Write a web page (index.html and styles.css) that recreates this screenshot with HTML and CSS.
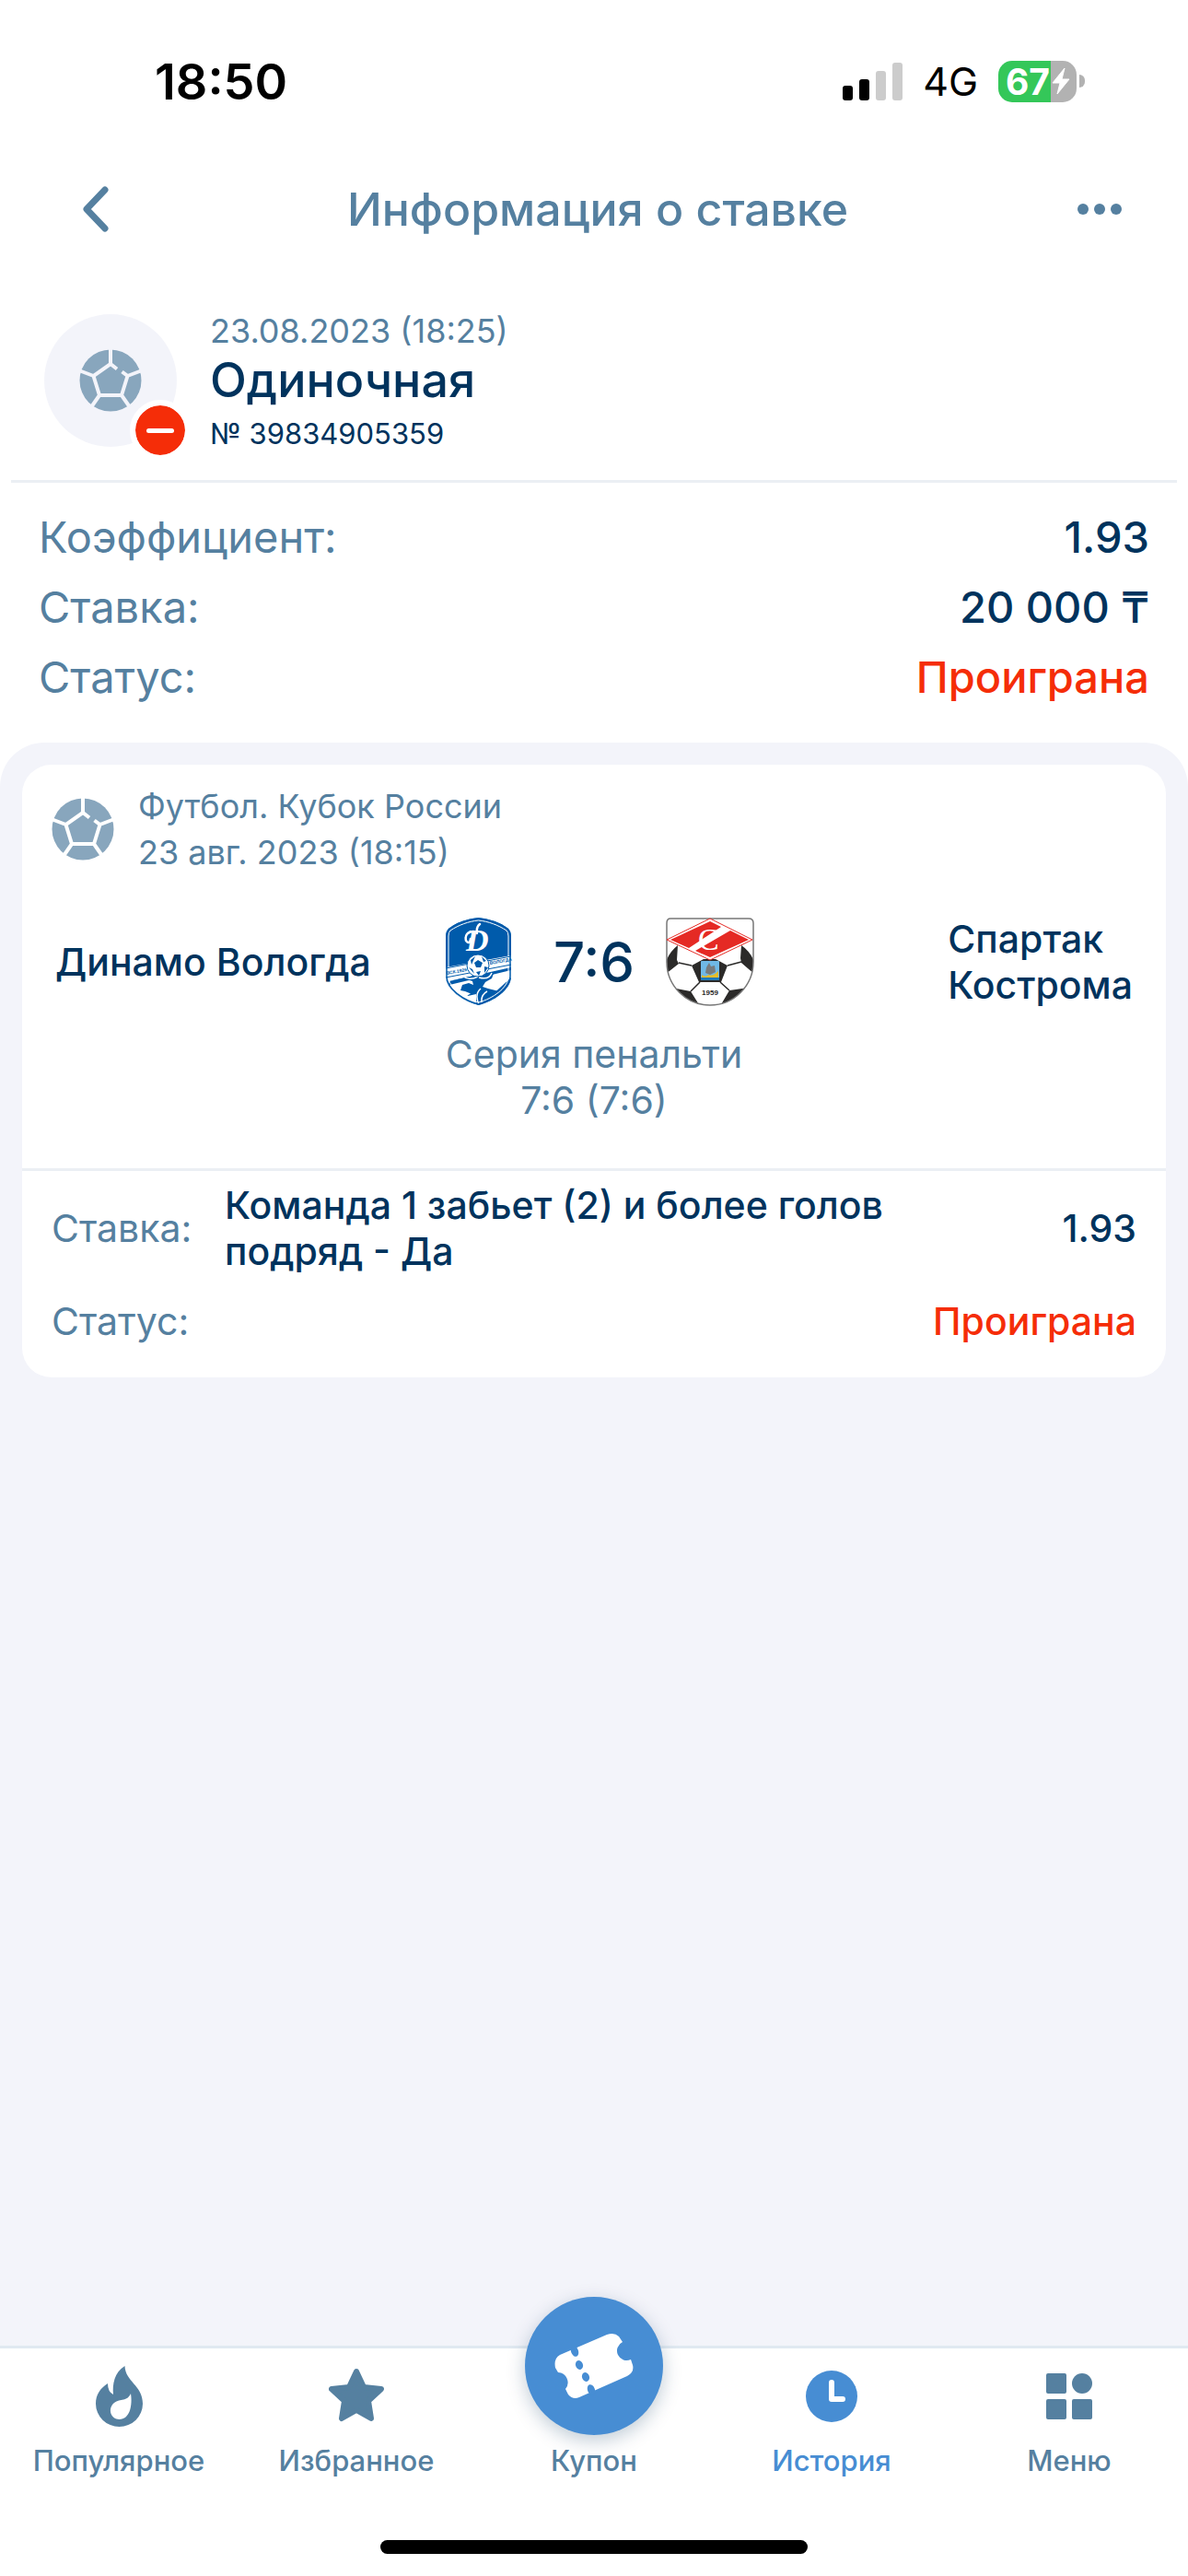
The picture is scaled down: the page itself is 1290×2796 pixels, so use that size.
FILE: index.html
```html
<!DOCTYPE html>
<html lang="ru">

<head>
    <meta charset="UTF-8" />
    <meta name="viewport" content="width=device-width, initial-scale=1.0" />
    <title>Информация о ставке</title>
    <link rel="stylesheet" href="styles.css">
</head>

<body>
    <!-- Shared icons -->
    <svg class="sprite" aria-hidden="true">
        <symbol id="ball" viewBox="-34 -34 68 68">
            <circle class="ball-fill" r="33.5" />
            <path class="ball-lines" d="M0-34V-18M7-12.5 0-18-18.5-5-12 16H12L18.5-5 12.500-9.500M18.500-5 33-10.500M-18.500-5-33-10.500M12 16 21 29M-12 16-21 29" />
        </symbol>
    </svg>

    <!-- Status bar -->
    <div class="status-bar">
        <span class="time">18:50</span>
        <div class="status-icons">
            <svg class="signal" width="65" height="42" viewBox="0 0 65 42">
                <rect x="0" y="26" width="11" height="16" rx="3" />
                <rect x="18" y="19" width="11" height="23" rx="3" />
                <rect x="36" y="10" width="11" height="32" rx="3" fill="#ccc" />
                <rect x="54" y="1" width="11" height="41" rx="3" fill="#ccc" />
            </svg>
            <span class="network">4G</span>
            <div class="battery">
                <span class="battery-body">
                    <span class="battery-level">67</span>
                    <svg width="20" height="30" viewBox="0 0 20 30">
                        <path d="M14 1 1 17H9L6 29 19 13H11Z" fill="#fff" stroke="#fff" stroke-width="1" stroke-linejoin="round" />
                    </svg>
                </span>
                <span class="battery-cap"></span>
            </div>
        </div>
    </div>

    <!-- Header -->
    <header class="header">
        <button class="icon-btn" aria-label="Назад">
            <svg width="28" height="50" viewBox="0 0 28 50">
                <path d="M24 4 4 25 24 46" fill="none" stroke="currentColor" stroke-width="7" stroke-linecap="round" stroke-linejoin="round" />
            </svg>
        </button>
        <h1>Информация о ставке</h1>
        <button class="icon-btn" aria-label="Ещё">
            <svg width="48" height="12" viewBox="0 0 48 12" fill="currentColor">
                <circle cx="6" cy="6" r="6" />
                <circle cx="24" cy="6" r="6" />
                <circle cx="42" cy="6" r="6" />
            </svg>
        </button>
    </header>

    <main>
        <!-- Bet summary -->
        <section class="bet">
            <div class="avatar">
                <svg class="ball"><use href="#ball" /></svg>
                <span class="badge"></span>
            </div>
            <div class="bet-info">
                <div class="bet-date">23.08.2023 (18:25)</div>
                <h2>Одиночная</h2>
                <div class="bet-number">№ 39834905359</div>
            </div>
        </section>

        <dl class="totals">
            <div class="total-row">
                <dt>Коэффициент:</dt>
                <dd>1.93</dd>
            </div>
            <div class="total-row">
                <dt>Ставка:</dt>
                <dd>20 000 ₸</dd>
            </div>
            <div class="total-row">
                <dt>Статус:</dt>
                <dd class="lost">Проиграна</dd>
            </div>
        </dl>

        <!-- Events -->
        <section class="events">
            <article class="card">
                <div class="event-header">
                    <svg class="ball"><use href="#ball" /></svg>
                    <div>
                        <div>Футбол. Кубок России</div>
                        <div>23 авг. 2023 (18:15)</div>
                    </div>
                </div>

                <div class="match">
                    <div class="team">Динамо Вологда</div>
                    <div class="result">
                        <svg class="crest" viewBox="-13 0 96 96" role="img" aria-label="Динамо Вологда">
                            <defs>
                                <clipPath id="shield">
                                    <path d="M35.500 0C46 1 59 5 68 12Q71 15 71 19V64C71 78 52 91 35.500 95 19 91 0 78 0 64V19Q0 15 3 12C12 5 25 1 35.500 0Z" />
                                </clipPath>
                            </defs>
                            <g clip-path="url(#shield)">
                                <rect width="71" height="96" fill="#005bab" />
                                <path d="M0 78V63L71 50V65L48 86 37 74 22 86Z" fill="#fff" />
                                <path d="M0 60V54L71 41V53L0 66Z" fill="#fff" />
                                <path d="M4 69 71 54V57L4 73Z" fill="#005bab" />
                                <path d="M3 69 35 62 50 61 53 58 50 66 43 70 40 75 46 77 58 80 46 89 35 95 35 80 32 82 26 82 21 80 16 79 18 73 25 71 30 73 29 69 21 66 15 67Z" fill="#005bab" />
                                <path d="M35 64Q25 69 18 63M36 65Q47 68 50 60M38 77Q31 83 36 94M45 80Q38 84 39 92" fill="none" stroke="#fff" stroke-width="1.500" />
                                <path d="M3 74Q12 88 24 91L33 94V83L24 85 13 80Z" fill="#fff" />
                            </g>
                            <path d="M35.500 3C46 4 57 8 66 14Q68 16 68 20V64C68 76 51 88 35.500 92 20 88 3 76 3 64V20Q3 16 5 14C14 8 25 4 35.500 3Z" fill="none" stroke="#fff" stroke-width="1" />
                            <path d="M35.500 1C46 2 58 5 67 12Q70 15 70 19V64C70 77 52 90 35.500 94 19 90 1 77 1 64V19Q1 15 4 12C13 5 25 2 35.500 1Z" fill="none" stroke="#005bab" stroke-width="1.500" />
                            <path d="M0 55 26 50M45 47 71 42M0 65 26 60M45 56 71 51" stroke="#005bab" stroke-width="1" />
                            <circle cx="35" cy="52" r="12" fill="#fff" stroke="#005bab" stroke-width="1" />
                            <path d="M31 49 35 46 40 49 38 54H33ZM27 46 32 42 28 51ZM39 42 44 47 41 48ZM25 54 29 56 31 61ZM42 53 46 54 42 60ZM33 59 38 58 36 63Z" fill="#005bab" />
                            <text class="crest-script" x="22" y="36">D</text>
                            <path d="M30 15Q20 16 22 25 26 30 27 23M37 7Q33 10 34 17" fill="none" stroke="#fff" stroke-width="2.500" stroke-linecap="round" />
                            <text class="crest-tiny" x="1" y="62" transform="rotate(-10 1 62)">ВСК.1926</text>
                            <text class="crest-tiny" x="48" y="51" transform="rotate(-10 48 51)">ВОЛОГДА</text>
                        </svg>
                        <span class="score">7:6</span>
                        <svg class="crest" viewBox="0 0 96 96" role="img" aria-label="Спартак Кострома">
                            <defs>
                                <clipPath id="crest-shape">
                                    <path d="M5 1H90Q95 1 95 6V48A47 47 0 0 1 1 48V6Q1 1 5 1Z" />
                                </clipPath>
                            </defs>
                            <g clip-path="url(#crest-shape)">
                                <rect width="96" height="96" fill="#fff" />
                                <path d="M0 61V48Q4 37 13 30L12 46 14 50ZM96 61V48Q92 37 82 30L81 44 82 49ZM28 52 41 45H54L67 52 60 70H36ZM6 76 27 80 37 96H20ZM90 76 69 79 59 96H76Z" fill="#2b2a29" />
                                <path d="M28 52 14 49M67 52 82 48M37 70 27 80M59 70 69 79" stroke="#2b2a29" stroke-width="1.500" />
                                <rect x="38" y="47" width="20" height="21" rx="1" fill="#6fb9e6" />
                                <path d="M39 62Q43 65 46 62 51 64 57 58V66H39Z" fill="#e5bd2b" />
                                <path d="M38 65H58V68H38Z" fill="#1f79b8" />
                                <path d="M47 49 44 54 43 60 48 62 54 59 53 52 49 53Z" fill="#777c7f" />
                            </g>
                            <path d="M5 1H90Q95 1 95 6V48A47 47 0 0 1 1 48V6Q1 1 5 1Z" fill="none" stroke="#777" stroke-width="1.500" />
                            <path d="M1 24 48 1 94 24 48 46Z" fill="#fff" stroke="#e52a24" stroke-width="1" />
                            <path d="M5 24 48 4 60 10 25 33ZM70 14 90 24 48 43 32 36Z" fill="#e52a24" />
                            <text class="crest-letter" x="35" y="35">С</text>
                            <text class="crest-year" x="48" y="84">1959</text>
                        </svg>
                    </div>
                    <div class="team team-away">Спартак<br>Кострома</div>
                </div>
                <div class="period">
                    <div>Серия пенальти</div>
                    <div>7:6 (7:6)</div>
                </div>

                <dl class="outcome">
                    <div class="outcome-row">
                        <dt>Ставка:</dt>
                        <dd class="pick">Команда 1 забьет (2) и более голов подряд - Да</dd>
                        <dd>1.93</dd>
                    </div>
                    <div class="outcome-row">
                        <dt>Статус:</dt>
                        <dd class="lost">Проиграна</dd>
                    </div>
                </dl>
            </article>
        </section>
    </main>

    <!-- Bottom navigation -->
    <footer class="footer">
        <nav class="tabs">
            <a href="#" class="tab">
                <svg width="52" height="66" viewBox="-1 0 52 66" fill="currentColor">
                    <path fill-rule="evenodd" d="M31.500 0C32 17 51 21 51 41A25.500 25 0 0 1 0 41C0 31 5 24 13 19Q13 28 19 31C18 20 20 7 31.500 0ZM38 30C34 39 27 35 20 40 12 47 17 58 25.500 58 37 58 40 43 38 30Z" />
                </svg>
                <span>Популярное</span>
            </a>
            <a href="#" class="tab">
                <svg width="60" height="66" viewBox="0 -3 60 66" fill="currentColor">
                    <path d="M30 3 38 20 57 22 43 35 46 54 30 45 14 54 17 35 3 22 22 20Z" stroke="currentColor" stroke-width="6" stroke-linejoin="round" />
                </svg>
                <span>Избранное</span>
            </a>
            <a href="#" class="tab tab-coupon">
                <span class="coupon-circle">
                    <svg width="150" height="150" viewBox="0 0 150 150">
                        <path d="M38 63 89 41Q97 38 102 43L106 49A10 10 0 0 0 115 68L117 74Q119 82 111 86L59 109Q52 112 47 106L44 100A11 11 0 0 0 36 82L33 77Q31 67 38 63Z" fill="#fff" />
                        <g fill="#478dd3">
                            <ellipse cx="54" cy="59" rx="4" ry="6" transform="rotate(-20 54 59)" />
                            <ellipse cx="59" cy="74" rx="4" ry="5" transform="rotate(-20 59 74)" />
                            <ellipse cx="66" cy="87" rx="4" ry="5" transform="rotate(-20 66 87)" />
                            <ellipse cx="72" cy="101" rx="4" ry="6" transform="rotate(-20 72 101)" />
                        </g>
                    </svg>
                </span>
                <span>Купон</span>
            </a>
            <a href="#" class="tab active">
                <svg width="56" height="66" viewBox="0 -5 56 66">
                    <circle cx="28" cy="28" r="28" fill="currentColor" />
                    <path d="M28 13V31H40" fill="none" stroke="#fff" stroke-width="6" stroke-linecap="round" stroke-linejoin="round" />
                </svg>
                <span>История</span>
            </a>
            <a href="#" class="tab">
                <svg width="50" height="66" viewBox="0 -8 50 66" fill="currentColor">
                    <rect width="22" height="22" rx="2" />
                    <circle cx="39" cy="11" r="11" />
                    <rect y="28" width="22" height="22" rx="2" />
                    <rect x="28" y="28" width="22" height="22" rx="2" />
                </svg>
                <span>Меню</span>
            </a>
        </nav>
        <div class="home-indicator"></div>
    </footer>
</body>

</html>
```
FILE: styles.css
```css
* {
    box-sizing: border-box;
}

body {
    font-family: Inter, "Noto Sans", sans-serif;
    background-color: #fff;
    color: #00335d;
    margin: 0;
    min-height: 100vh;
    display: flex;
    flex-direction: column;
}

h1,
h2,
dl,
dd {
    margin: 0;
}

.sprite {
    position: absolute;
    width: 0;
    height: 0;
}

/* Status bar */
.status-bar {
    display: flex;
    justify-content: space-between;
    align-items: center;
    height: 176px;
    padding: 0 112px 0 168px;
    color: #000;
}

.time {
    font-size: 54px;
    font-weight: 600;
}

.status-icons {
    display: flex;
    align-items: center;
    gap: 22px;
}

.network {
    font-size: 43px;
}

.battery {
    display: flex;
    align-items: center;
    gap: 3px;
}

.battery-body {
    display: flex;
    align-items: center;
    gap: 2px;
    width: 85px;
    height: 45px;
    padding-left: 8px;
    border-radius: 15px;
    background: linear-gradient(to right, #34c759 67%, #b2b2b2 67%);
}

.battery-level {
    color: white;
    font-size: 39px;
    font-weight: 700;
}

.battery-cap {
    width: 6px;
    height: 14px;
    border-radius: 0 7px 7px 0;
    background: #b2b2b2;
}

/* Header */
.header {
    display: flex;
    justify-content: space-between;
    align-items: center;
    height: 102px;
    padding: 0 40px 0 48px;
    color: #5580a0;
}

.header h1 {
    font-size: 50px;
    font-weight: 500;
}

.icon-btn {
    display: flex;
    justify-content: center;
    align-items: center;
    width: 112px;
    height: 96px;
    padding: 0;
    border: none;
    background: none;
    color: inherit;
    cursor: pointer;
}

main {
    flex: 1;
    display: flex;
    flex-direction: column;
}

/* Bet summary */
.bet {
    display: flex;
    align-items: center;
    gap: 36px;
    margin: 0 12px;
    padding: 50px 36px 23px;
    border-bottom: 3px solid #ebeff4;
}

.avatar {
    position: relative;
    display: flex;
    justify-content: center;
    align-items: center;
    width: 144px;
    height: 144px;
    border-radius: 50%;
    background: #f3f4fa;
    color: #f3f4fa;
}

.ball {
    width: 68px;
    height: 68px;
}

.ball-fill {
    fill: #88a6bd;
}

.ball-lines {
    fill: none;
    stroke: currentColor;
    stroke-width: 4px;
}

.badge {
    position: absolute;
    right: -15px;
    bottom: -15px;
    display: flex;
    justify-content: center;
    align-items: center;
    width: 66px;
    height: 66px;
    border: 6px solid white;
    border-radius: 50%;
    background: #f52d08;
    background-clip: padding-box;
}

.badge::before {
    content: "";
    width: 30px;
    height: 5px;
    border-radius: 3px;
    background: white;
}

.bet-info {
    padding-top: 8px;
}

.bet-date {
    color: #5580a0;
    font-size: 36px;
    line-height: 46px;
}

.bet-info h2 {
    font-size: 52px;
    font-weight: 500;
    line-height: 62px;
}

.bet-number {
    font-size: 31px;
    line-height: 54px;
}

.totals {
    padding: 21px 42px 33px;
    font-size: 47px;
    line-height: 76px;
}

.total-row {
    display: flex;
    justify-content: space-between;
}

dt {
    color: #5580a0;
}

dd {
    font-weight: 500;
}

.lost {
    color: #f52d08;
}

/* Events */
.events {
    flex: 1;
    padding: 24px;
    border-radius: 48px 48px 0 0;
    background: #f3f4fa;
}

.card {
    border-radius: 32px;
    background: white;
    font-size: 41px;
    line-height: 50px;
}

.event-header {
    display: flex;
    align-items: center;
    gap: 26px;
    padding: 20px 32px 44px;
    color: #5580a0;
    font-size: 36px;
}

.event-header .ball {
    color: white;
}

.match {
    display: grid;
    grid-template-columns: 1fr auto 1fr;
    align-items: center;
    padding: 0 36px;
}

.team {
    font-weight: 500;
}

.team-away {
    justify-self: end;
}

.result {
    display: flex;
    align-items: center;
}

.crest {
    width: 96px;
    height: 96px;
}

.crest-script {
    fill: white;
    font: italic 700 34px "Liberation Serif", serif;
}

.crest-tiny {
    fill: #005bab;
    font: 700 5px "Liberation Sans", sans-serif;
}

.crest-letter {
    fill: white;
    font: 34px "Liberation Serif", serif;
}

.crest-year {
    fill: #2b2a29;
    font: 700 8px "Liberation Sans", sans-serif;
    text-anchor: middle;
}

.score {
    width: 156px;
    font-size: 60px;
    font-weight: 500;
    text-align: center;
}

.period {
    padding: 25px 36px 49px;
    border-bottom: 3px solid #ebeff4;
    color: #5580a0;
    text-align: center;
}

.outcome {
    display: flex;
    flex-direction: column;
    gap: 26px;
    padding: 12px 32px 36px;
}

.outcome-row {
    display: flex;
    justify-content: space-between;
    align-items: center;
}

.outcome dt {
    flex: 0 0 188px;
}

.pick {
    flex: 1;
    padding-right: 160px;
}

/* Bottom navigation */
.footer {
    border-top: 3px solid #e0e9f1;
    background: white;
}

.tabs {
    display: grid;
    grid-template-columns: repeat(5, 1fr);
    align-items: end;
    padding-top: 19px;
}

.tab {
    display: flex;
    flex-direction: column;
    align-items: center;
    gap: 19px;
    color: #5580a0;
    font-size: 31px;
    font-weight: 500;
    line-height: 36px;
    text-decoration: none;
}

.tab.active {
    color: #478dd3;
}

.tab-coupon {
    gap: 10px;
    margin-top: -75px;
}

.coupon-circle {
    width: 150px;
    height: 150px;
    border-radius: 50%;
    background: #478dd3;
    box-shadow: 0 6px 20px rgba(0, 51, 93, 0.25);
}

.home-indicator {
    width: 36%;
    height: 15px;
    margin: 68px auto 24px;
    border-radius: 8px;
    background: black;
}
```
